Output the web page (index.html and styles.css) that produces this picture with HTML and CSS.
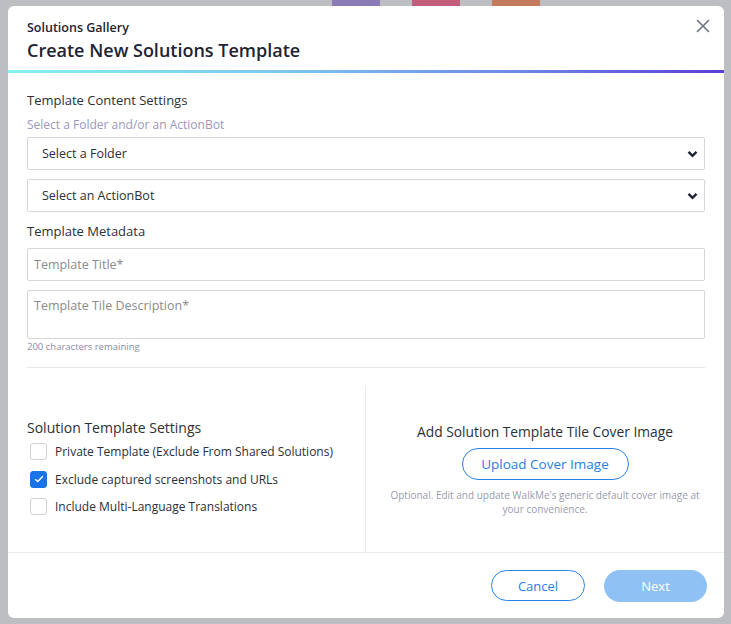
FILE: index.html
```html
<!DOCTYPE html>
<html lang="en">
<head>
    <meta charset="UTF-8">
    <meta name="viewport" content="width=device-width, initial-scale=1.0">
    <title>Solutions Gallery - Create New Solutions Template</title>
    <link rel="stylesheet" href="styles.css">
</head>
<body>
    <div class="backdrop-strip">
        <span class="tile tile-purple"></span>
        <span class="tile tile-pink"></span>
        <span class="tile tile-orange"></span>
    </div>

    <div class="modal">
        <div class="modal-header">
            <div class="header-text">
                <div class="eyebrow">Solutions Gallery</div>
                <h1>Create New Solutions Template</h1>
            </div>
            <button class="close-btn" aria-label="Close">
                <svg width="14" height="14" viewBox="0 0 14 14">
                    <path d="M1.5 1.5 L12.5 12.5 M12.5 1.5 L1.5 12.5" stroke="#6d7280" stroke-width="1.6" stroke-linecap="round" fill="none"/>
                </svg>
            </button>
        </div>
        <div class="gradient-bar"></div>

        <div class="modal-body">
            <h2 class="section-title first">Template Content Settings</h2>
            <p class="hint">Select a Folder and/or an ActionBot</p>

            <div class="select-wrap">
                <select class="form-control">
                    <option>Select a Folder</option>
                </select>
                <svg class="chevron" width="11" height="8" viewBox="0 0 11 8">
                    <path d="M1.5 1.8 L5.5 5.8 L9.5 1.8" stroke="#1e2433" stroke-width="2.4" fill="none"/>
                </svg>
            </div>
            <div class="select-wrap">
                <select class="form-control">
                    <option>Select an ActionBot</option>
                </select>
                <svg class="chevron" width="11" height="8" viewBox="0 0 11 8">
                    <path d="M1.5 1.8 L5.5 5.8 L9.5 1.8" stroke="#1e2433" stroke-width="2.4" fill="none"/>
                </svg>
            </div>

            <h2 class="section-title">Template Metadata</h2>
            <input type="text" class="form-control text-input" placeholder="Template Title*">
            <textarea class="form-control text-area" placeholder="Template Tile Description*"></textarea>
            <div class="counter">200 characters remaining</div>
            <hr class="divider">
        </div>

        <div class="settings-row">
            <div class="settings-col">
                <div>
                    <h3 class="col-title">Solution Template Settings</h3>
                    <label class="check-row">
                        <span class="checkbox"></span>
                        Private Template (Exclude From Shared Solutions)
                    </label>
                    <label class="check-row">
                        <span class="checkbox checked">
                            <svg width="10" height="8" viewBox="0 0 10 8">
                                <path d="M1.2 4.2 L3.8 6.6 L8.8 1.2" stroke="#fff" stroke-width="1.4" fill="none"/>
                            </svg>
                        </span>
                        Exclude captured screenshots and URLs
                    </label>
                    <label class="check-row">
                        <span class="checkbox"></span>
                        Include Multi-Language Translations
                    </label>
                </div>
            </div>
            <div class="cover-col">
                <div class="cover-inner">
                    <h3 class="cover-title">Add Solution Template Tile Cover Image</h3>
                    <button class="btn btn-outline upload-btn">Upload Cover Image</button>
                    <p class="cover-note">Optional. Edit and update WalkMe's generic default cover image at your convenience.</p>
                </div>
            </div>
        </div>

        <div class="modal-footer">
            <button class="btn btn-outline cancel-btn">Cancel</button>
            <button class="btn btn-primary next-btn" disabled>Next</button>
        </div>
    </div>
</body>
</html>
```

FILE: styles.css
```css
/* Create template modal over dimmed gallery */
body {
    margin: 0;
    font-family: "Open Sans", "Liberation Sans", sans-serif;
    background-color: #bdbec2;
    color: #2b2f38;
    width: 731px;
    height: 624px;
    overflow: hidden;
}

.backdrop-strip {
    display: flex;
    height: 6px;
    padding-left: 332px;
}

.tile {
    display: block;
    width: 48px;
    height: 6px;
}

.tile-purple {
    background-color: #8a7ab6;
}

.tile-pink {
    background-color: #c25e7c;
    margin-left: 32px;
}

.tile-orange {
    background-color: #c47a5c;
    margin-left: 32px;
}

.modal {
    margin-left: 8px;
    width: 716px;
    height: 612px;
    background-color: #fff;
    border-radius: 6px;
    display: flex;
    flex-direction: column;
    overflow: hidden;
}

.modal-header {
    display: flex;
    justify-content: space-between;
    align-items: flex-start;
    padding: 13px 14px 7px 19px;
}

.eyebrow {
    font-size: 12.5px;
    font-weight: 600;
    line-height: 18px;
    color: #1e2433;
}

h1 {
    margin: 0;
    font-size: 18px;
    font-weight: 600;
    line-height: 26px;
    color: #1e2433;
}

.close-btn {
    border: none;
    background: none;
    padding: 0;
    margin-top: 0;
    width: 14px;
    height: 14px;
    cursor: pointer;
}

.close-btn svg {
    display: block;
}

.gradient-bar {
    height: 3px;
    background: linear-gradient(90deg, #84f2ee 0%, #7cc4ef 40%, #6b7fe3 75%, #5b3ed8 100%);
}

.modal-body {
    padding: 0 19px;
}

.section-title {
    margin: 7px 0 0;
    font-size: 13px;
    font-weight: 400;
    line-height: 20px;
    color: #2b2f38;
}

.section-title.first {
    margin-top: 17px;
}

.hint {
    margin: 6px 0 3px;
    font-size: 12px;
    line-height: 18px;
    color: #9a97c0;
}

.form-control {
    display: block;
    width: 100%;
    box-sizing: border-box;
    border: 1px solid #d6d6d6;
    border-radius: 2px;
    background-color: #fff;
    font-family: inherit;
    font-size: 12.5px;
    color: #2b2f38;
    outline: none;
}

.select-wrap {
    position: relative;
    margin-bottom: 9px;
}

.select-wrap select {
    height: 33px;
    padding: 0 14px;
    -webkit-appearance: none;
    appearance: none;
}

.chevron {
    position: absolute;
    right: 7px;
    top: 13px;
    pointer-events: none;
}

.text-input {
    height: 33px;
    margin-top: 7px;
    padding: 0 6px;
}

.text-area {
    height: 49px;
    margin-top: 9px;
    padding: 6px 6px;
    resize: none;
}

.form-control::placeholder {
    color: #8b8b8b;
}

.counter {
    margin-top: 1px;
    font-size: 9.5px;
    line-height: 14px;
    color: #8a8ba6;
}

.divider {
    margin: 13px 0 0;
    border: none;
    border-top: 1px solid #e6e6e6;
}

.settings-row {
    display: flex;
    margin-top: 18px;
    height: 166px;
    border-bottom: 1px solid #e8ebf0;
}

.settings-col {
    width: 357px;
    box-sizing: border-box;
    padding-left: 19px;
    display: flex;
    align-items: center;
}

.col-title {
    margin: 0;
    font-size: 14px;
    font-weight: 400;
    line-height: 20px;
    color: #2b2f38;
}

.check-row {
    display: flex;
    align-items: center;
    height: 27.5px;
    font-size: 12px;
    color: #2b2f38;
}

.checkbox {
    width: 15px;
    height: 15px;
    border: 1px solid #cfd1d6;
    border-radius: 3px;
    margin: 0 8px 0 3px;
    display: flex;
    align-items: center;
    justify-content: center;
    flex-shrink: 0;
}

.checkbox.checked {
    background-color: #1b73e8;
    border-color: #1b73e8;
}

.cover-col {
    flex: 1;
    border-left: 1px solid #e8ebf0;
    display: flex;
    align-items: center;
    justify-content: center;
}

.cover-inner {
    text-align: center;
    width: 316px;
}

.cover-title {
    margin: 0 0 6px;
    font-size: 13.8px;
    font-weight: 400;
    line-height: 20px;
    color: #2b2f38;
}

.btn {
    font-family: inherit;
    border-radius: 16px;
    cursor: pointer;
    box-sizing: border-box;
}

.btn-outline {
    background-color: #fff;
    border: 1px solid #2a83e6;
    color: #2a7de1;
}

.upload-btn {
    width: 167px;
    height: 32px;
    font-size: 13.5px;
}

.cover-note {
    margin: 8px 0 0;
    font-size: 10px;
    line-height: 14px;
    color: #9a9bab;
}

.modal-footer {
    display: flex;
    justify-content: flex-end;
    align-items: center;
    gap: 19px;
    flex: 1;
    padding-right: 17px;
}

.cancel-btn {
    width: 94px;
    height: 31px;
    font-size: 13px;
}

.btn-primary {
    border: none;
    background-color: #8fc1f4;
    color: #fff;
}

.next-btn {
    width: 103px;
    height: 32px;
    font-size: 13px;
    cursor: default;
}
```
